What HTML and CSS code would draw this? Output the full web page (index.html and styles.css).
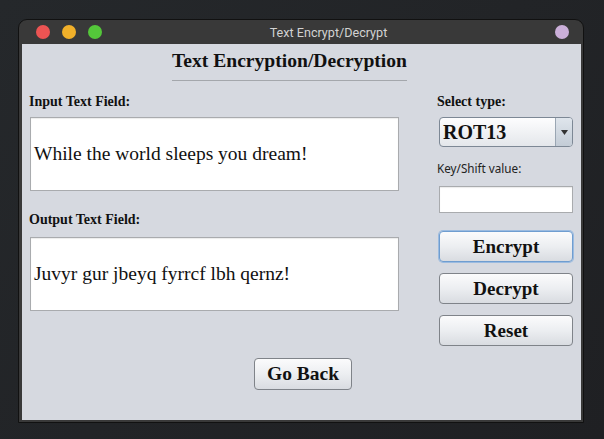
FILE: index.html
```html
<!DOCTYPE html>
<html>
<head>
<meta charset="utf-8">
<link rel="stylesheet" href="styles.css">
</head>
<body>
<div class="window">
  <div class="titlebar">
    <div class="lights">
      <span class="light red"></span>
      <span class="light yellow"></span>
      <span class="light green"></span>
    </div>
    <div class="title">Text Encrypt/Decrypt</div>
    <span class="light purple"></span>
  </div>
  <div class="content">
    <div class="heading"><span class="heading-text">Text Encryption/Decryption</span></div>
    <div class="main">
      <div class="left">
        <div class="label">Input Text Field:</div>
        <div class="field big">While the world sleeps you dream!</div>
        <div class="label out">Output Text Field:</div>
        <div class="field big">Juvyr gur jbeyq fyrrcf lbh qernz!</div>
      </div>
      <div class="right">
        <div class="label">Select type:</div>
        <div class="combo">
          <span class="combo-value">ROT13</span>
          <span class="combo-arrow"><svg width="7" height="5" viewBox="0 0 7 5"><path d="M0 0H7L3.5 5Z" fill="#333"/></svg></span>
        </div>
        <div class="sans-label">Key/Shift value:</div>
        <div class="field key"></div>
        <button class="btn side focus">Encrypt</button>
        <button class="btn side">Decrypt</button>
        <button class="btn side">Reset</button>
      </div>
    </div>
    <div class="bottom">
      <button class="btn back">Go Back</button>
    </div>
  </div>
</div>
</body>
</html>
```
FILE: styles.css
```css
html, body {
  margin: 0;
  padding: 0;
}
body {
  width: 604px;
  height: 439px;
  background: linear-gradient(135deg, #25282b 0%, #1f2023 100%);
  overflow: hidden;
}
.window {
  margin: 19px 0 0 18px;
  width: 564px;
  height: 402px;
  border: 1px solid #111;
  border-radius: 9px 9px 0 0;
  background: #393939;
  display: flex;
  flex-direction: column;
}
.titlebar {
  height: 24px;
  display: flex;
  align-items: center;
  padding: 0 14px 0 17px;
  border-radius: 9px 9px 0 0;
}
.lights {
  display: flex;
  gap: 12px;
}
.light {
  width: 14px;
  height: 14px;
  border-radius: 50%;
  display: block;
}
.red { background: #ec5453; }
.yellow { background: #f1b02a; }
.green { background: #54c73a; }
.purple { background: #cbafd9; }
.title {
  flex: 1;
  text-align: center;
  font-family: Roboto, "Liberation Sans", sans-serif;
  font-size: 12.6px;
  color: #d2d2d2;
}
.content {
  flex: 1;
  margin: 0 2px 2px 3px;
  background: #d6d9e0;
  padding: 0 0 0 7px;
  font-family: "Liberation Serif", "Times New Roman", serif;
  color: #111;
}
.heading {
  padding: 7px 0 0 143px;
}
.heading-text {
  display: inline-block;
  font-size: 19.6px;
  font-weight: bold;
  line-height: 20px;
  padding-bottom: 9px;
  border-bottom: 1px solid #a4a7ac;
}
.main {
  display: grid;
  grid-template-columns: 370px 137px;
  column-gap: 38px;
  margin-top: 13px;
}
.label {
  font-size: 14px;
  font-weight: bold;
  line-height: 15px;
  height: 15px;
}
.label.out {
  margin-top: 21px;
}
.field {
  background: #fff;
  border: 1px solid #a9abae;
  box-shadow: inset 0 1px 1px rgba(0,0,0,0.08);
  box-sizing: border-box;
}
.big {
  margin: 8px 0 0 1px;
  width: 369px;
  height: 74px;
  display: flex;
  align-items: center;
  padding-left: 3px;
  font-size: 19.5px;
}
.label.out + .big {
  margin-top: 10px;
}
.combo {
  margin: 8px 0 0 2px;
  width: 134px;
  height: 30px;
  box-sizing: border-box;
  border: 1px solid #7d8895;
  border-radius: 4px;
  background: linear-gradient(#fdfdfe, #e4e7eb);
  display: flex;
  align-items: center;
  overflow: hidden;
}
.combo-value {
  flex: 1;
  font-size: 20px;
  font-weight: bold;
  padding-left: 3px;
}
.combo-arrow {
  width: 16px;
  align-self: stretch;
  border-left: 1px solid #9aa6b3;
  background: linear-gradient(#dfe5ec, #c3ccd6);
  display: flex;
  align-items: center;
  justify-content: center;
}
.sans-label {
  font-family: "Noto Sans", "Open Sans", sans-serif;
  font-size: 11.7px;
  line-height: 16px;
  margin-top: 13px;
  color: #222;
}
.key {
  margin: 10px 0 0 2px;
  width: 134px;
  height: 27px;
}
.btn {
  display: block;
  box-sizing: border-box;
  border: 1px solid #7f8389;
  border-radius: 4px;
  background: linear-gradient(#fbfbfc 0%, #eceef1 50%, #d9dce1 100%);
  font-family: "Liberation Serif", "Times New Roman", serif;
  font-weight: bold;
  color: #111;
  padding: 0;
}
.side {
  margin: 11px 0 0 2px;
  width: 134px;
  height: 31px;
  font-size: 19px;
}
.side.focus {
  margin-top: 18px;
  border-color: #6f9dd0;
  box-shadow: 0 0 0 1px #9bbbe0;
}
.bottom {
  display: flex;
  justify-content: center;
  margin-top: 12px;
}
.back {
  margin-left: -4px;
  width: 98px;
  height: 32px;
  font-size: 19.5px;
}
```
